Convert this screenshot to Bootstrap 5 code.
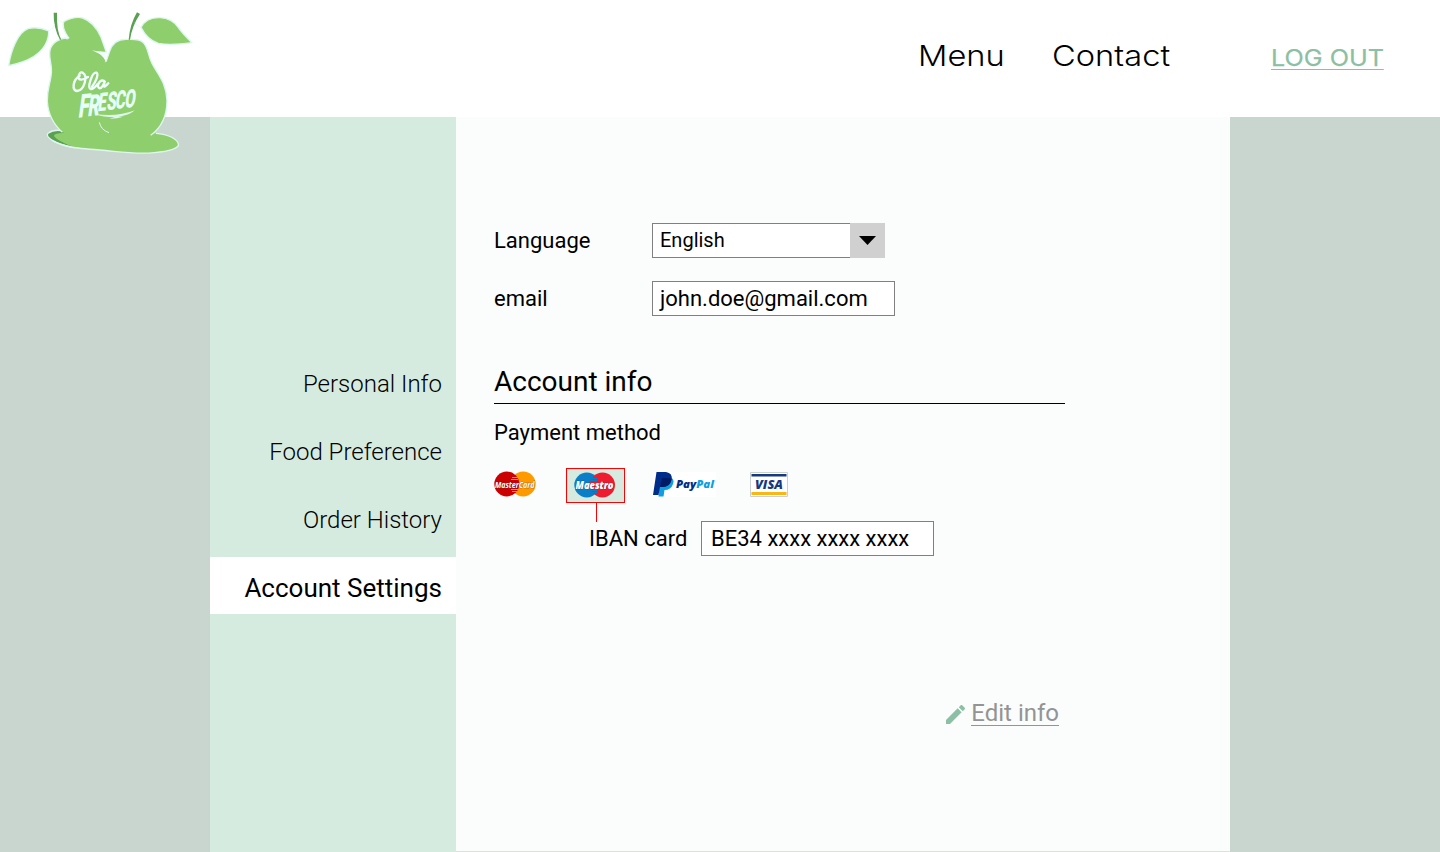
<!DOCTYPE html>
<html lang="en">
<head>
<meta charset="utf-8">
<meta name="viewport" content="width=device-width, initial-scale=1">
<title>Ola Fresco – Account settings</title>
<link rel="stylesheet" href="https://cdn.jsdelivr.net/npm/bootstrap@5.3.0/dist/css/bootstrap.min.css">
<style>
  body { font-family: Roboto, sans-serif; color: #000; background: #c8d6cf; font-size: 22px; line-height: 26px; }
  .site-head { height: 117px; background: #fff; }
  .logo { position: absolute; left: 0; top: 0; z-index: 2; }
  .top-link { font-family: Inter, sans-serif; font-weight: 300; font-size: 29px; line-height: 40px; color: #000; text-decoration: none; white-space: nowrap; margin-top: 4px; }
  .top-link.menu { margin-left: 918px; width: 134px; }
  .top-link.contact { width: 219px; }
  .top-link.logout { font-size: 23px; font-weight: 400; color: #8cbfa3; margin-top: 6px; }
  .stretch { display: inline-block; transform-origin: 0 50%; transform: scaleX(1.125); }
  .logout .stretch { border-bottom: 1px solid #8cbfa3; line-height: 22px; transform: scaleX(1.095); -webkit-text-stroke: .25px #8cbfa3; }
  .shell { width: 1020px; height: 735px; background: #d6e6dd; }
  .side { width: 246px; background: #d6ebdf; padding-top: 236px; }
  .side a { display: block; text-align: right; padding-right: 14px; color: #000; text-decoration: none; font-size: 24px; font-weight: 300; height: 68px; line-height: 62px; }
  .side a.current { background: #fff; height: 57px; line-height: 63px; font-size: 26px; font-weight: 400; }
  .content { height: 734px; background: #fbfdfc; padding: 106px 165px 0 38px; }
  .row-label { width: 158px; }
  .field { height: 35px; border: 1px solid #808080; background: #fff; padding: 0 7px; line-height: 33px; white-space: nowrap; }
  .select-btn { width: 35px; height: 35px; background: #d0d0d0; }
  .section-title { font-size: 28px; line-height: 34px; margin-top: 49px; padding-bottom: 4px; border-bottom: 1px solid #000; font-weight: 400; margin-bottom: 16px; color: #000; }
  .pay { height: 35px; margin-top: 22px; }
  .pay svg { overflow: visible; }
  .pay > svg { margin-bottom: 3px; }
  .chosen { width: 59px; height: 35px; border: 1px solid #f00; background: #d6ebdf; margin-left: 30px; }
  .chosen::after { content: ""; position: absolute; left: 29px; top: 34px; width: 1px; height: 19px; background: #f00; }
  .edit { color: #949494; font-size: 24px; line-height: 28px; margin-top: 146px; padding-right: 6px; }
  .edit:hover { color: #777; }
  .edit span { border-bottom: 1px solid #949494; line-height: 23px; }
</style>
</head>
<body>
<header class="site-head position-relative d-flex">
  <a class="logo" href="#" aria-label="Ola Fresco">
    <svg class="d-block" width="210" height="165" viewBox="0 0 630 495">
      <g stroke="#ddf7ee" stroke-width="4" stroke-linejoin="round">
        <path fill="#59a052" d="M191 393Q163 386 144 400Q136 408 158 422Q180 435 222 443L250 420Z"/>
        <path fill="#8fce6c" stroke="none" d="M191 399Q164 399 162 407Q166 418 213 438Q232 445 300 450C352 454 402 464 463 458C507 454 540 445 535 431C530 416 505 403 468 400Z"/>
        <path fill="none" d="M158 422Q180 435 213 441Q232 445 300 450C352 454 402 464 463 458C507 454 540 445 535 431C530 416 505 403 468 400"/>
        <path fill="#8fce6c" stroke="none" d="M195 114C167 119 150 137 149 158C148 181 157 198 154 222C150 256 142 262 142 303C144 340 156 369 187 397L300 444L452 406C479 386 501 352 501 302C499 247 473 223 456 190C443 166 447 147 430 128C419 117 404 119 380 118C350 117 336 133 329 154L318 185Q306 160 284 155L240 124Z"/>
        <path fill="none" d="M187 397C156 369 144 340 142 303C142 262 150 256 154 222C157 198 148 181 149 158C150 137 167 119 195 114L210 119M318 185L329 154C336 133 350 117 380 118C404 119 419 117 430 128C447 147 443 166 456 190C473 223 499 247 501 302C501 352 479 386 452 406"/>
        <path fill="#8fce6c" d="M26 197C33 151 53 98 84 86Q112 78 146 93C147 126 126 153 101 170Q72 188 26 197Z"/>
        <path fill="#8fce6c" d="M209 117C188 91 187 71 192 64Q224 48 248 54C280 65 294 91 303 112Q312 137 319 157L284 156L235 150Z"/>
        <path fill="#8fce6c" d="M423 82C435 60 457 52 480 53Q516 54 536 84Q550 103 576 128Q510 137 475 130Q442 120 423 82Z"/>
      </g>
      <path fill="#8fce6c" d="M212 112L245 119L280 151L300 162L313 185L260 190L190 155L200 121Z"/>
      <path fill="#eefffc" d="M276 151Q295 155 319 157L315 167L322 173L314 189L317 175Q306 165 295 160Z"/>
      <path fill="#59a052" d="M161 38L171 38Q169 92 184 119L180 119Q160 83 161 38ZM411 37L420 42Q396 78 390 119L386 119Q390 72 411 37Z"/>
      <path fill="none" stroke="#ddf7ee" stroke-width="2" d="M146 93Q160 87 164 73M173 59L191 69M404 69L423 83"/>
      <path fill="none" stroke="#eefffc" stroke-width="7" stroke-linecap="round" d="M239 227C218 240 215 270 231 273C253 271 265 227 248 218Q238 213 235 234Q242 245 264 231M276 260C286 248 298 222 289 218C277 215 261 262 272 267Q281 268 293 252M313 243C298 236 287 262 299 265Q309 263 315 242L311 257Q312 265 325 250"/>
      <g transform="translate(233 353) skewY(-5) skewX(-8) scale(.6 1)">
        <text font-family="Roboto, sans-serif" font-weight="900" font-size="76" fill="#e6fff8" x="0 48 95 139 182 229" y="0 -2 -14 -15 -16 -17"><tspan font-size="98">F</tspan><tspan font-size="89">R</tspan>ESCO</text>
      </g>
      <path fill="#ddf7ee" d="M285 342Q350 352 405 331Q385 347 356 350L371 350Q347 357 328 356L344 352Q309 352 285 342Z"/>
      <path fill="none" stroke="#ddf7ee" stroke-width="3" d="M298 367Q303 390 327 398"/>
    </svg>
  </a>
  <nav class="d-flex pt-4 mt-2" aria-label="Main">
    <a class="top-link menu" href="#"><span class="stretch">Menu</span></a>
    <a class="top-link contact" href="#"><span class="stretch">Contact</span></a>
    <a class="top-link logout" href="#"><span class="stretch">LOG OUT</span></a>
  </nav>
</header>

<main class="shell mx-auto d-flex">
  <nav class="side flex-shrink-0" aria-label="Account">
    <a href="#">Personal Info</a>
    <a href="#">Food Preference</a>
    <a href="#">Order History</a>
    <a class="current" href="#" aria-current="page">Account Settings</a>
  </nav>
  <section class="content flex-grow-1">
    <div class="d-flex align-items-center">
      <div class="row-label">Language</div>
      <div class="field border-end-0" style="width:198px;font-size:20px">English</div>
      <div class="select-btn d-flex align-items-center justify-content-center">
        <svg width="17" height="9" viewBox="0 0 17 9"><path d="M0 0H17L8.5 9Z"/></svg>
      </div>
    </div>
    <div class="d-flex align-items-center" style="margin-top:23px">
      <div class="row-label">email</div>
      <div class="field" style="width:243px">john.doe@gmail.com</div>
    </div>
    <h2 class="section-title">Account info</h2>
    <div>Payment method</div>
    <div class="pay d-flex align-items-center">
      <svg width="42" height="26" viewBox="0 0 42 26" role="img" aria-label="MasterCard">
        <circle cx="29.2" cy="13" r="12.5" fill="#f90"/><circle cx="12.8" cy="13" r="12.5" fill="#c00"/>
        <path stroke="#f90" d="M18 6.5h6M17 8.500h7M17 18.5h7M18 20.500h6"/>
        <text x="1" y="16.800" font-family="Open Sans, sans-serif" font-style="italic" font-weight="700" font-size="9.500" textLength="39.500" lengthAdjust="spacingAndGlyphs" fill="#fff" stroke="#202060" stroke-width=".4" paint-order="stroke">MasterCard</text>
      </svg>
      <div class="chosen position-relative d-flex">
        <svg style="margin:3px 0 0 7px" width="42" height="26" viewBox="0 0 42 26" role="img" aria-label="Maestro">
          <circle cx="12.800" cy="13" r="12.500" fill="#0a7fc7"/><circle cx="28.500" cy="13" r="12.500" fill="#ee1c2e"/>
          <path stroke="#0a7fc7" d="M18 6.500h5M17 8.500h6M17 18.500h6M18 20.500h5"/>
          <text x="1.500" y="17" font-family="Open Sans, sans-serif" font-style="italic" font-weight="800" font-size="11" textLength="38" lengthAdjust="spacingAndGlyphs" fill="#fff" stroke="#174578" stroke-width=".4" paint-order="stroke">Maestro</text>
        </svg>
      </div>
      <svg style="margin-left:27px" width="64" height="26" viewBox="0 0 64 26" role="img" aria-label="PayPal">
        <path fill="#fff" d="M1 1h63v25H1z"/>
        <path fill="#0d9fe0" d="M8 6H18Q23 8 21 13Q19 19 12.500 19L11.500 25.500H6.500Z"/>
        <path fill="#002d8a" d="M4.500 1H14Q21 2 19.500 9Q18 16 10.500 16H8L6.500 24H1Z"/>
        <path fill="#001c64" d="M10 7H16Q19 7 19.600 8Q18 16 10.500 16H8Z"/>
        <text x="24" y="17" font-family="Open Sans, sans-serif" font-style="italic" font-weight="800" font-size="11" textLength="38" lengthAdjust="spacingAndGlyphs"><tspan fill="#002d8a">Pay</tspan><tspan fill="#0d9fe0">Pal</tspan></text>
      </svg>
      <svg style="margin-left:34px" width="38" height="26" viewBox="0 0 38 26" role="img" aria-label="Visa">
        <path fill="#fff" stroke="#ccd0d0" d="M.5 1.500h37v24H.5z"/>
        <path fill="#17397e" d="M1.500 3h35v2.500h-35z"/><path fill="#fbb615" d="M1.500 21h35v3h-35z"/>
        <text x="5" y="17.500" font-family="Open Sans, sans-serif" font-style="italic" font-weight="800" font-size="12.500" textLength="28" lengthAdjust="spacingAndGlyphs" fill="#17397e">VISA</text>
      </svg>
    </div>
    <div class="d-flex align-items-center" style="margin:18px 0 0 95px">
      <div style="width:112px">IBAN card</div>
      <div class="field" style="width:233px;padding-left:9px">BE34 xxxx xxxx xxxx</div>
    </div>
    <a class="edit d-flex justify-content-end align-items-center text-decoration-none" href="#">
      <svg style="margin-right:6px" width="19" height="19" viewBox="3 3 18 18" fill="#8cbfa3"><path d="M3 17.250V21h3.750L17.810 9.940l-3.750-3.750L3 17.250zM20.710 7.040a1 1 0 0 0 0-1.410l-2.340-2.340a1 1 0 0 0-1.410 0l-1.830 1.830 3.750 3.750 1.830-1.830z"/></svg>
      <span>Edit info</span>
    </a>
  </section>
</main>
<script src="https://cdn.jsdelivr.net/npm/bootstrap@5.3.0/dist/js/bootstrap.bundle.min.js"></script>
</body>
</html>
